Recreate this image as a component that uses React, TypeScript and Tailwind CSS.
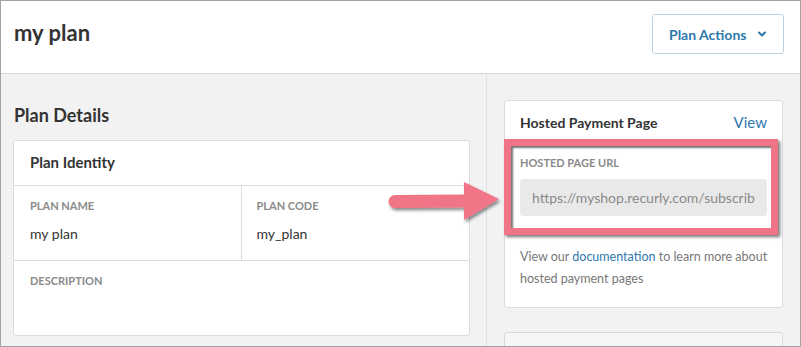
import { ChevronDown } from "lucide-react";

const FONT = { fontFamily: '"Lato", "Open Sans", sans-serif' };

function FieldLabel({ children }: { children: React.ReactNode }) {
  return (
    <p className="text-[11px] font-bold uppercase leading-[14px] text-[#8a8a8a]">
      {children}
    </p>
  );
}

function Arrow() {
  return (
    <svg
      className="absolute left-[378px] top-[172px] pointer-events-none"
      width="132"
      height="56"
      viewBox="0 0 132 56"
    >
      <defs>
        <filter id="arrowShadow" x="-10%" y="-20%" width="130%" height="150%">
          <feDropShadow dx="1.5" dy="2.5" stdDeviation="1.5" floodColor="#000" floodOpacity="0.45" />
        </filter>
      </defs>
      <g filter="url(#arrowShadow)" fill="#ef7487">
        <path d="M16 22 L88 21.5 L88 34.5 L16 35 A6.5 6.5 0 0 1 16 22 Z" />
        <path d="M85 9 L120 26 L85 47 Z" />
      </g>
    </svg>
  );
}

export default function App() {
  return (
    <div
      className="relative w-[801px] h-[347px] overflow-hidden border border-[#a3a3a3] bg-[#f2f2f2] text-[#333]"
      style={FONT}
    >
      <header className="h-[73px] bg-white border-b border-[#d6d6d6] flex items-center justify-between pl-[13px] pr-[16px]">
        <h1 className="text-[22px] font-bold leading-none text-[#333] -mt-[9px]">my plan</h1>
        <button className="shrink-0 whitespace-nowrap h-[40px] w-[132px] -mt-[6px] rounded-[3px] border border-[#bcd2e1] bg-white flex items-center justify-between pl-[16px] pr-[15px] text-[14px] font-bold text-[#2e78ac]">
          <span>Plan Actions</span>
          <ChevronDown size={12} strokeWidth={4} className="shrink-0 text-[#2e78ac]" />
        </button>
      </header>

      <div className="flex h-[272px]">
        <section className="shrink-0 w-[486px] border-r border-[#e2e2e2] pl-[12px] pr-[16px] pt-[29px]">
          <h2 className="text-[18px] font-bold leading-[24px] text-[#333] pl-[1px]">Plan Details</h2>
          <div className="mt-[13px] bg-white border border-[#dcdcdc] rounded-[3px]">
            <div className="h-[45px] border-b border-[#dcdcdc] flex items-center px-[16px] pb-[2px]">
              <h3 className="text-[15px] font-bold text-[#333]">Plan Identity</h3>
            </div>
            <div className="grid grid-cols-2 h-[75px] border-b border-[#dcdcdc]">
              <div className="border-r border-[#dcdcdc] px-[16px] pt-[13px]">
                <FieldLabel>Plan Name</FieldLabel>
                <p className="mt-[12px] text-[14px] leading-[18px] text-[#333]">my plan</p>
              </div>
              <div className="px-[15px] pt-[13px]">
                <FieldLabel>Plan Code</FieldLabel>
                <p className="mt-[12px] text-[14px] leading-[18px] text-[#333]">my_plan</p>
              </div>
            </div>
            <div className="h-[74px] px-[16px] pt-[13px]">
              <FieldLabel>Description</FieldLabel>
            </div>
          </div>
        </section>

        <aside className="flex-1 min-w-0 pl-[17px] pr-[17px] pt-[26px]">
          <div className="relative h-[208px] bg-white border border-[#dcdcdc] rounded-[3px]">
            <div className="flex items-center justify-between px-[15px] pt-[10px]">
              <h3 className="text-[14px] font-bold text-[#333]">Hosted Payment Page</h3>
              <a className="text-[15px] text-[#2e78ac]">View</a>
            </div>
            <div className="px-[15px] pt-[22px]">
              <FieldLabel>Hosted Page URL</FieldLabel>
              <div className="mt-[9px] h-[37px] rounded-[3px] bg-[#e9e9e9] px-[12px] flex items-center">
                <span className="block flex-1 min-w-0 overflow-hidden whitespace-nowrap text-[14px] text-[#8a8a8a]">
                  https://myshop.recurly.com/subscribe/my_plan
                </span>
              </div>
            </div>
            <p className="pl-[15px] pr-[10px] pt-[30px] text-[12.5px] leading-[22px] text-[#777]">
              View our <a className="text-[#2e78ac]">documentation</a> to learn more about hosted payment pages
            </p>
            <div className="absolute left-[-1px] top-[38px] w-[274px] h-[96px] border-[7px] border-[#ef7487] shadow-[2px_2px_3px_rgba(0,0,0,0.55),inset_2px_2px_2px_rgba(0,0,0,0.55)] pointer-events-none" />
          </div>
          <div className="mt-[24px] h-[40px] bg-[#f5f5f5] border border-[#d8d8d8] rounded-[3px]" />
        </aside>
      </div>

      <Arrow />
    </div>
  );
}
